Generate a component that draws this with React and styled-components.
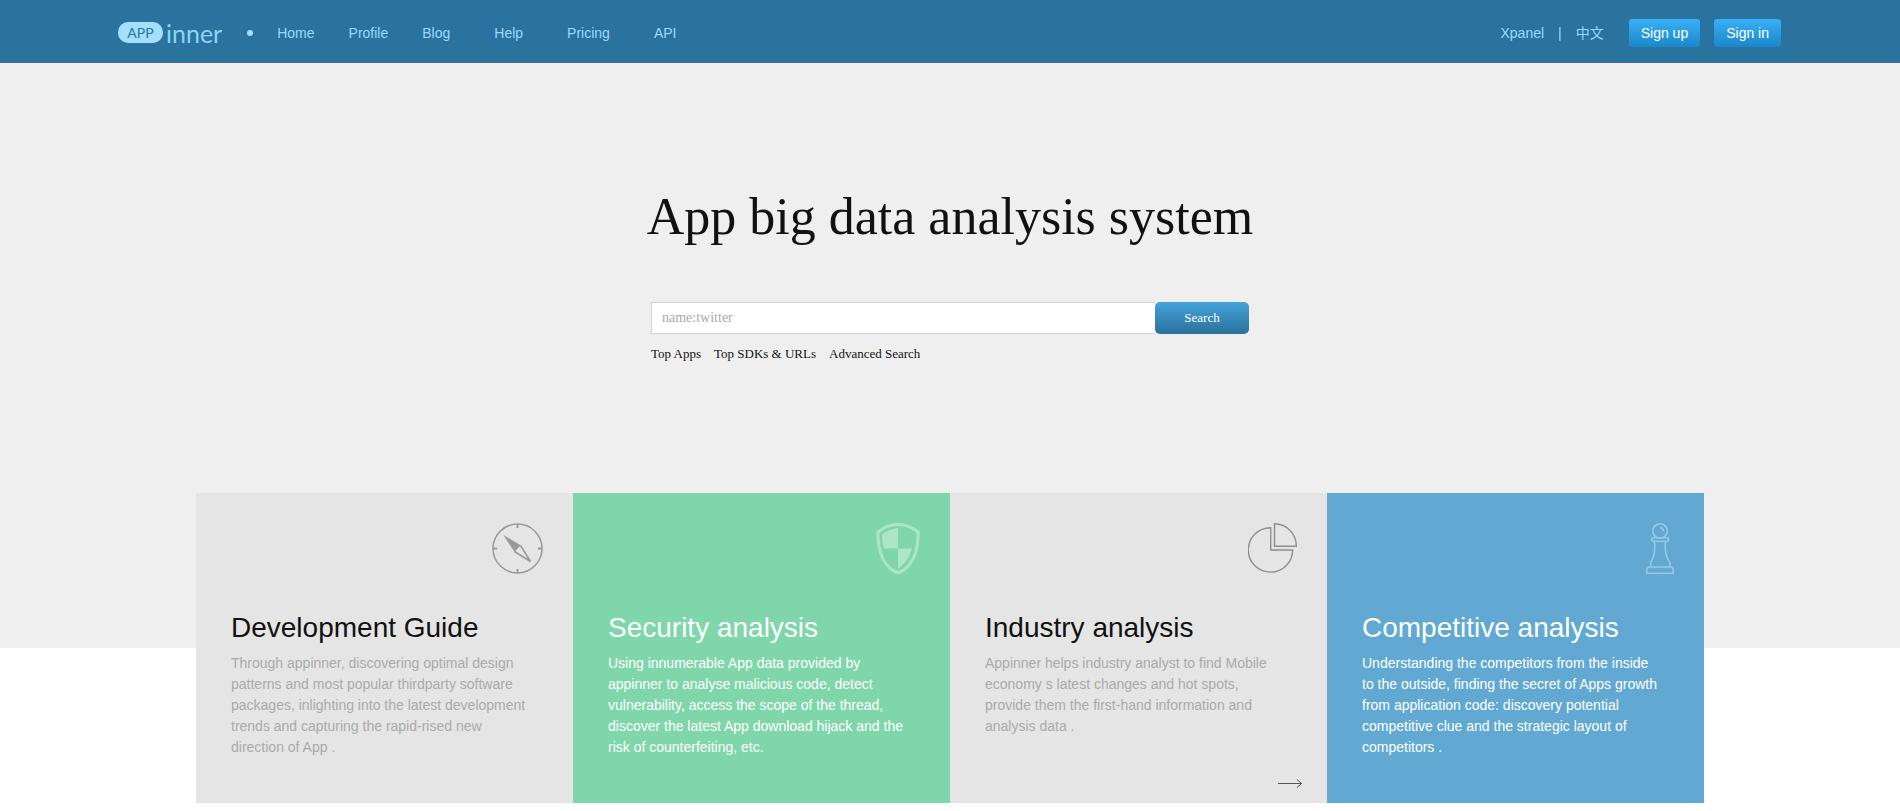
import React, { useState } from 'react';
import styled, { createGlobalStyle, css } from 'styled-components'

const navItems = [
  { text: 'Home' },
  { text: 'Profile' },
  { text: 'Blog', wide: true },
  { text: 'Help', wide: true },
  { text: 'Pricing', wide: true },
  { text: 'API' },
];

const Compass = () => (
  <svg width="51" height="51" viewBox="0 0 51 51" fill="none" stroke="#999" strokeWidth="1.5">
    <circle cx="25.5" cy="25.5" r="24.5" />
    <path d="M25.5 1v4M25.5 46v4M1 25.5h4M46 25.5h4" strokeWidth="1.8" />
    <path d="M12 12.5L28.5 22.5L22.5 28.5Z" fill="#999" strokeWidth="0.5" />
    <path d="M28.5 22.5L38.5 38.5L22.5 28.5" />
  </svg>
)

const Shield = () => (
  <svg width="44" height="51" viewBox="0 0 44 51" fill="none">
    <path
      d="M22 1.5C16 1.5 8 4 2 9C1.5 25 6 42 19 48.7Q22 50.2 25 48.7C38 42 42.5 25 42 9C36 4 28 1.5 22 1.5Z"
      stroke="#aee5c8"
      strokeWidth="3"
      strokeLinejoin="round"
    />
    <path d="M22 5C17 5.5 11 7.5 6 11.5C6 16 6.500 21 8 25.5H22Z" fill="#aee5c8" />
    <path d="M22 25.5H36C33.5 34 29 41 22 45.5Z" fill="#aee5c8" />
  </svg>
)

const Pie = () => (
  <svg width="49" height="51" viewBox="0 0 49 51" fill="none" stroke="#8f8f8f" strokeWidth="1.4">
    <path d="M22.7 4.7A22.2 22.2 0 1 0 44.700 27H22.7Z" />
    <path d="M26.5 0.8V23.2H48.3A22 22 0 0 0 26.5 0.8Z" />
  </svg>
)

const Pawn = () => (
  <svg width="28" height="51" viewBox="0 0 28 51" fill="none" stroke="#98c8e6" strokeWidth="1.6">
    <circle cx="14" cy="8" r="7.2" />
    <path d="M14 4.5A4 4 0 0 1 17.5 8" />
    <rect x="5.7" y="14.7" width="17" height="3.6" rx="1.8" />
    <path d="M8.5 18.5C9.5 28 8.5 33 5.5 38C4.5 40 4.5 42 5 43.5M19.5 18.5C18.5 28 19.5 33 23 38C24.5 40 24.5 42 23.5 43.5" />
    <path d="M0.8 50.2V47.5C0.8 45 2 44 4 44H24C26 44 27.2 45 27.2 47.5V50.2Z" />
  </svg>
)

const Arrow = () => (
  <svg width="24" height="9" viewBox="0 0 24 9" fill="none" stroke="#555">
    <path d="M0 4.5H23.5M19 0.5L23.5 4.5L19 8.5" />
  </svg>
)

const cards = [
  {
    title: 'Development Guide',
    text: 'Through appinner, discovering optimal design patterns and most popular thirdparty software packages, inlighting into the latest development trends and capturing the rapid-rised new direction of App .',
    icon: <Compass />,
  },
  {
    title: 'Security analysis',
    text: 'Using innumerable App data provided by appinner to analyse malicious code, detect vulnerability, access the scope of the thread, discover the latest App download hijack and the risk of counterfeiting, etc.',
    icon: <Shield />,
    color: '#7fd6aa',
  },
  {
    title: 'Industry analysis',
    text: 'Appinner helps industry analyst to find Mobile economy s latest changes and hot spots, provide them the first-hand information and analysis data .',
    icon: <Pie />,
    arrow: true,
  },
  {
    title: 'Competitive analysis',
    text: 'Understanding the competitors from the inside to the outside, finding the secret of Apps growth from application code: discovery potential competitive clue and the strategic layout of competitors .',
    icon: <Pawn />,
    color: '#61a9d3',
  },
];

const App = () => {

  const [keyword, setKeyword] = useState('');

  return (
    <>
      <GlobalStyle />
      <Header>
        <Logo href="#" aria-label="APP inner">
          <LogoPill>APP</LogoPill>
          <LogoText>inner</LogoText>
        </Logo>
        <Dot />
        <Nav>
          {navItems.map((item) => (
            <NavLink key={item.text} href="#" $wide={item.wide}>{item.text}</NavLink>
          ))}
        </Nav>
        <UserArea>
          <TopLink href="#">Xpanel</TopLink>
          <Divider>|</Divider>
          <TopLink href="#">中文</TopLink>
          <SignBtns>
            <SignBtn type="button">Sign up</SignBtn>
            <SignBtn type="button">Sign in</SignBtn>
          </SignBtns>
        </UserArea>
      </Header>

      <Hero>
        <Title>App big data analysis system</Title>
        <SearchArea>
          <SearchForm onSubmit={(e) => { e.preventDefault() }}>
            <SearchInput
              type="text"
              aria-label="Search apps"
              placeholder="name:twitter"
              value={keyword}
              onChange={(e) => setKeyword(e.target.value)}
            />
            <SearchBtn type="submit">Search</SearchBtn>
          </SearchForm>
          <QuickLinks>
            <QuickLink href="#">Top Apps</QuickLink>
            <QuickLink href="#">Top SDKs &amp; URLs</QuickLink>
            <QuickLink href="#">Advanced Search</QuickLink>
          </QuickLinks>
        </SearchArea>
      </Hero>

      <CardList>
        {cards.map((card) => (
          <Card key={card.title} $color={card.color}>
            <IconBox>{card.icon}</IconBox>
            <CardTitle>{card.title}</CardTitle>
            <CardText>{card.text}</CardText>
            {card.arrow && <More href="#" aria-label="Read more"><Arrow /></More>}
          </Card>
        ))}
      </CardList>
    </>
  );
}

const GlobalStyle = createGlobalStyle`
  * {
    box-sizing: border-box;
  }

  body {
    margin: 0;
    background-color: white;
    font-family: "Liberation Sans", "Noto Sans CJK SC", sans-serif;
    font-size: 14px;
  }

  a {
    text-decoration: none;
  }
`

const Header = styled.header`
  display: flex;
  align-items: center;
  height: 63px;
  padding: 2px 119px 0 118px;
  background-color: #2a739e;
  box-shadow: inset 0 -1px #3a7192;
`

const Logo = styled.a`
  display: flex;
  align-items: center;
  color: #a4dfff;
  font-family: Lato, sans-serif;
`

const LogoPill = styled.span`
  width: 45px;
  height: 21px;
  border-radius: 10px;
  background-color: #a4dfff;
  color: #2a739e;
  font-size: 14px;
  line-height: 21px;
  text-align: center;
`

const LogoText = styled.span`
  margin-left: 3px;
  font-size: 25px;
  line-height: 30px;
  color: #8fd3f7;
`

const Dot = styled.span`
  width: 6px;
  height: 6px;
  margin: 0 24px 0 25px;
  border-radius: 50%;
  background-color: #a4dfff;
`

const Nav = styled.nav`
  display: flex;
`

const NavLink = styled.a`
  margin-right: ${(props) => (props.$wide ? '44px' : '34px')};
  color: #98dbff;
  line-height: 20px;
`

const UserArea = styled.div`
  display: flex;
  align-items: center;
  margin-left: auto;
`

const TopLink = styled.a`
  color: #98dbff;
  line-height: 20px;
`

const Divider = styled.span`
  margin: 0 14px;
  color: #98dbff;
  line-height: 20px;
`

const SignBtns = styled.div`
  display: flex;
  gap: 14px;
  margin-left: 25px;
`

const SignBtn = styled.button`
  height: 28px;
  padding: 0 12px;
  border: none;
  border-radius: 3px;
  background: linear-gradient(#38b0f5, #1a87cb);
  color: white;
  font-family: inherit;
  font-size: 14px;
  cursor: pointer;
`

const Hero = styled.section`
  display: flex;
  flex-direction: column;
  align-items: center;
  padding: 124px 20px 284px;
  background-color: #efefef;
  font-family: "Liberation Serif", serif;
`

const Title = styled.h1`
  margin: 0;
  color: #111;
  font-size: 52px;
  font-weight: normal;
  line-height: 60px;
  text-align: center;
`

const SearchArea = styled.div`
  width: 100%;
  max-width: 598px;
  margin-top: 55px;
`

const SearchForm = styled.form`
  display: flex;
`

const SearchInput = styled.input`
  flex: 1;
  min-width: 0;
  height: 32px;
  padding: 0 10px;
  border: 1px solid #d2d2d2;
  border-right: none;
  background-color: white;
  font-family: inherit;
  font-size: 14px;

  &::placeholder {
    color: #a9a9a9;
  }
`

const SearchBtn = styled.button`
  width: 94px;
  height: 32px;
  border: none;
  border-radius: 5px;
  background: linear-gradient(#45a3da, #2a719c);
  color: white;
  font-family: inherit;
  font-size: 13px;
  cursor: pointer;
`

const QuickLinks = styled.div`
  display: flex;
  gap: 13px;
  margin-top: 10px;
`

const QuickLink = styled.a`
  color: #111;
  font-size: 13px;
  line-height: 20px;
`

const CardList = styled.section`
  display: grid;
  grid-template-columns: repeat(4, 1fr);
  max-width: 1508px;
  margin: -155px auto 8px;
`

const Card = styled.article`
  display: flex;
  flex-direction: column;
  min-height: 310px;
  padding-bottom: 15px;
  background-color: #e5e5e5;
  color: #aaa;

  ${(props) => props.$color && css`
    background-color: ${props.$color};
    color: white;
  `}
`

const IconBox = styled.div`
  display: flex;
  justify-content: flex-end;
  height: 51px;
  margin: 30px 30px 0;
`

const CardTitle = styled.h2`
  margin: 38px 35px 0;
  color: #111;
  font-size: 28px;
  font-weight: normal;
  line-height: 32px;

  ${Card}:nth-child(even) & {
    color: white;
  }
`

const CardText = styled.p`
  max-width: 299px;
  margin: 9px 0 0 35px;
  line-height: 21px;
`

const More = styled.a`
  display: flex;
  align-self: flex-end;
  margin: auto 25px 0 0;
`

export default App;
